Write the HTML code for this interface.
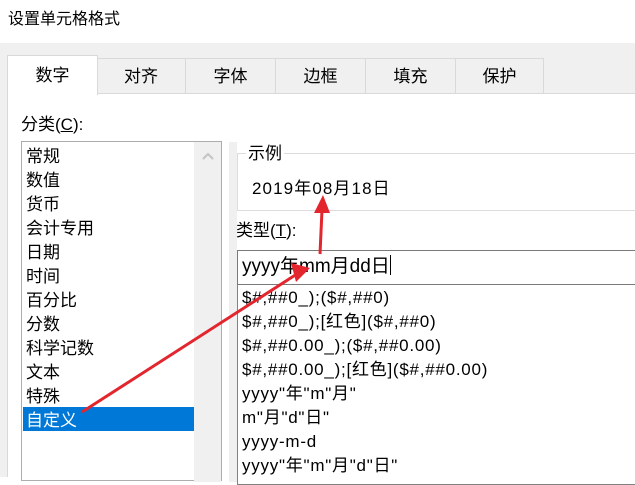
<!DOCTYPE html>
<html><head><meta charset="utf-8"><style>
*{margin:0;padding:0;box-sizing:border-box}
body{width:635px;height:477px;overflow:hidden;background:#fff;font-family:"Liberation Sans","Microsoft YaHei","Noto Sans CJK SC",sans-serif;color:#000;position:relative}
.a{position:absolute;white-space:nowrap}
.f{font-size:17px;line-height:24px}
</style></head><body>
<div class="a" style="left:8px;top:9px;font-size:16px;line-height:22px">设置单元格格式</div>
<div class="a" style="left:0;top:43px;width:635px;height:434px;background:#f0f0f0"></div>
<div class="a" style="left:7px;top:93px;width:628px;height:384px;background:#fff;border-left:1px solid #d9d9d9;border-top:1px solid #d9d9d9"></div>
<!-- tabs -->
<div class="a" style="left:7px;top:55px;width:91px;height:40px;background:#fff;border:1px solid #d9d9d9;border-bottom:none;font-size:17px;text-align:center;line-height:40px">数字</div>
<div class="a" style="left:97px;top:58px;width:89px;height:36px;border:1px solid #d9d9d9;border-left:none;border-bottom:none;font-size:17px;text-align:center;line-height:36px">对齐</div>
<div class="a" style="left:186px;top:58px;width:90px;height:36px;border:1px solid #d9d9d9;border-left:none;border-bottom:none;font-size:17px;text-align:center;line-height:36px">字体</div>
<div class="a" style="left:276px;top:58px;width:90px;height:36px;border:1px solid #d9d9d9;border-left:none;border-bottom:none;font-size:17px;text-align:center;line-height:36px">边框</div>
<div class="a" style="left:366px;top:58px;width:90px;height:36px;border:1px solid #d9d9d9;border-left:none;border-bottom:none;font-size:17px;text-align:center;line-height:36px">填充</div>
<div class="a" style="left:456px;top:58px;width:88px;height:36px;border:1px solid #d9d9d9;border-left:none;border-bottom:none;font-size:17px;text-align:center;line-height:36px">保护</div>
<div class="a f" style="left:21px;top:113px">分类(<u>C</u>):</div>
<!-- left list -->
<div class="a" style="left:21px;top:141px;width:201px;height:340px;border:1px solid #adadad;background:#fff"></div>
<div class="a" style="left:194px;top:142px;width:27px;height:340px;background:#f0f0f0"></div>
<svg class="a" style="left:200px;top:150px" width="16" height="12"><path d="M3 9 L8 4 L13 9" fill="none" stroke="#c4c4c4" stroke-width="2"/></svg>
<div class="a" style="left:229px;top:142px;width:8px;height:340px;background:#f0f0f0"></div>
<div class="a" style="left:23px;top:407px;width:171px;height:24px;background:#0078d7"></div>
<div class="a f" style="left:26px;top:145px">常规<br>数值<br>货币<br>会计专用<br>日期<br>时间<br>百分比<br>分数<br>科学记数<br>文本<br>特殊<br><span style="color:#fff">自定义</span></div>
<!-- sample -->
<div class="a" style="left:237px;top:153px;width:400px;height:58px;border:1px solid #dcdcdc"></div>
<div class="a f" style="left:246px;top:142px;background:#fff;padding:0 2px">示例</div>
<div class="a f" style="left:252px;top:177px;letter-spacing:1.1px">2019年08月18日</div>
<div class="a f" style="left:236px;top:219px">类型(<u>T</u>):</div>
<div class="a" style="left:237px;top:250px;width:400px;height:35px;border:1px solid #7a7a7a;border-right:none"></div>
<div class="a" style="left:242px;top:253px;font-size:19px;line-height:28px">yyyy年mm月dd日<span style="display:inline-block;width:1px;height:20px;background:#000;vertical-align:-3px"></span></div>
<div class="a" style="left:237px;top:285px;width:400px;height:200px;border:1px solid #828282;border-right:none;border-top:none"></div>
<div class="a f" style="left:242px;top:286px;font-size:17px;letter-spacing:0.75px">$#,##0_);($#,##0)<br>$#,##0_);[红色]($#,##0)<br>$#,##0.00_);($#,##0.00)<br>$#,##0.00_);[红色]($#,##0.00)<br>yyyy"年"m"月"<br>m"月"d"日"<br>yyyy-m-d<br>yyyy"年"m"月"d"日"</div>
<!-- arrows -->
<svg class="a" style="left:0;top:0" width="635" height="477">
<line x1="82" y1="412" x2="300" y2="272" stroke="#e3262d" stroke-width="3"/>
<polygon points="291,263 310,268 296,282" fill="#e3262d"/>
<line x1="320" y1="254" x2="322" y2="210" stroke="#e3262d" stroke-width="3"/>
<polygon points="314,213 330,213 323,195" fill="#e3262d"/>
</svg>
</body></html>
